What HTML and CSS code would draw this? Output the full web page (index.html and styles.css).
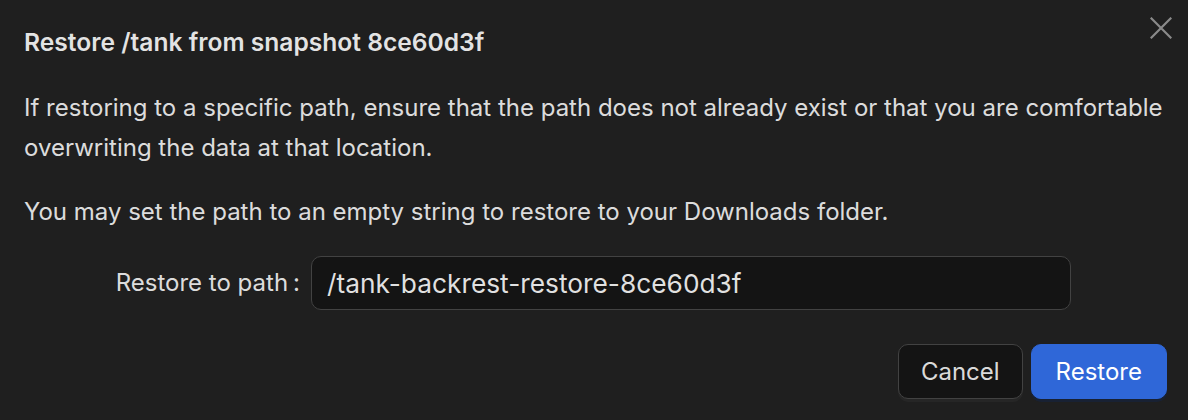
FILE: index.html
```html
<!DOCTYPE html>
<html lang="en">
<head>
<meta charset="utf-8">
<title>Restore snapshot</title>
<link rel="stylesheet" href="styles.css">
</head>
<body>
<div class="modal">
  <button class="close" aria-label="Close">
    <svg viewBox="0 0 22 22" width="22" height="22"><path d="M1.5 1.5 L20.5 20.5 M20.5 1.5 L1.5 20.5" stroke="currentColor" stroke-width="2.2" stroke-linecap="square" fill="none"/></svg>
  </button>
  <h1 class="title">Restore /tank from snapshot 8ce60d3f</h1>
  <div class="body">
    <p>If restoring to a specific path, ensure that the path does not already exist or that you are comfortable overwriting the data at that location.</p>
    <p>You may set the path to an empty string to restore to your Downloads folder.</p>
    <div class="form-row">
      <label class="label" for="path">Restore to path<span class="colon">:</span></label>
      <input id="path" class="input" type="text" value="/tank-backrest-restore-8ce60d3f">
    </div>
  </div>
  <div class="footer">
    <button class="btn btn-default">Cancel</button>
    <button class="btn btn-primary">Restore</button>
  </div>
</div>
</body>
</html>
```
FILE: styles.css
```css
* { box-sizing: border-box; }
html, body {
  margin: 0;
  padding: 0;
  background: #1f1f1f;
}
body {
  font-family: "Inter", "Noto Sans", sans-serif;
  color: rgba(255, 255, 255, 0.86);
  width: 1188px;
  height: 420px;
  overflow: hidden;
}
.modal {
  position: relative;
  padding: 24px 24px 20px 24px;
  height: 420px;
}
.close {
  position: absolute;
  top: 17px;
  right: 16px;
  width: 22px;
  height: 22px;
  padding: 0;
  border: 0;
  background: transparent;
  color: #8a8a8a;
  display: flex;
}
.title {
  margin: 0;
  font-size: 24.6px;
  line-height: 36px;
  font-weight: 600;
  color: rgba(255, 255, 255, 0.88);
}
.body {
  padding-top: 28px;
  font-size: 24px;
  line-height: 40px;
}
.body p {
  margin: 0 0 24px 0;
}
.form-row {
  display: grid;
  grid-template-columns: 287px 760px;
  align-items: center;
  margin-top: 1px;
}
.label {
  display: flex;
  justify-content: flex-end;
  align-items: center;
  padding-right: 11px;
  font-size: 24px;
}
.colon {
  margin-left: 5px;
}
.input {
  height: 54px;
  width: 760px;
  background: #141414;
  border: 1.5px solid #424242;
  border-radius: 10px;
  color: rgba(255, 255, 255, 0.88);
  font-family: "Inter", "Noto Sans", sans-serif;
  font-size: 26.3px;
  padding: 0 15px;
  outline: none;
}
.footer {
  display: flex;
  justify-content: flex-end;
  gap: 8px;
  margin-top: 34px;
  margin-right: -3px;
}
.btn {
  height: 55px;
  border-radius: 10px;
  font-family: "Inter", "Noto Sans", sans-serif;
  font-size: 24px;
  padding: 0 22px;
  cursor: pointer;
}
.btn-default {
  background: #141414;
  border: 1.5px solid #424242;
  color: rgba(255, 255, 255, 0.86);
  box-shadow: 0 3px 0 rgba(255, 255, 255, 0.03);
}
.btn-primary {
  background: #2f67d8;
  border: 1.5px solid #2f67d8;
  color: #ffffff;
  padding: 0 24px;
  box-shadow: 0 3px 0 rgba(10, 40, 100, 0.3);
}
```
